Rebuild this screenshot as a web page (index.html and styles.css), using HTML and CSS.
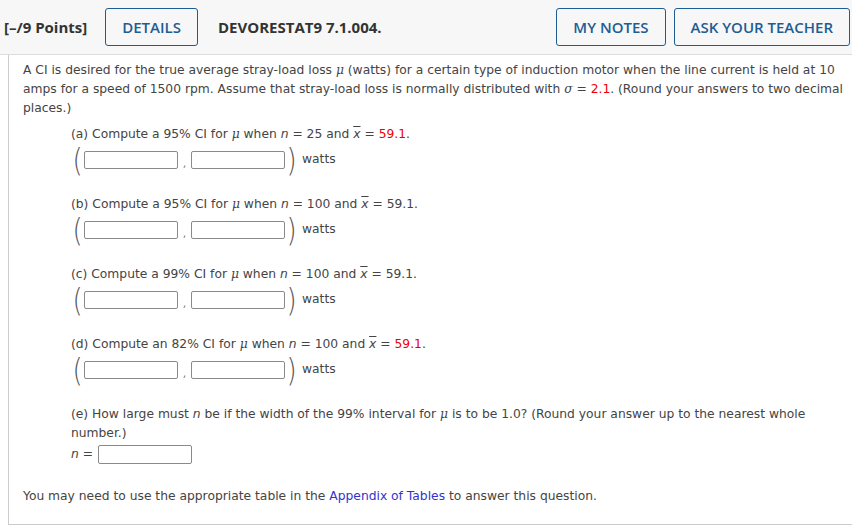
FILE: index.html
```html
<!DOCTYPE html>
<html>
<head>
<meta charset="utf-8">
<link rel="stylesheet" href="styles.css">
</head>
<body>
<div class="header">
  <span class="points">[–/9 Points]</span>
  <button class="btn details">DETAILS</button>
  <span class="qid">DEVORESTAT9 7.1.004.</span>
  <span class="spacer"></span>
  <button class="btn">MY NOTES</button>
  <button class="btn">ASK YOUR TEACHER</button>
</div>
<div class="content">
  <p class="intro">A CI is desired for the true average stray-load loss <i class="mu">μ</i> (watts) for a certain type of induction motor when the line current is held at 10 amps for a speed of 1500 rpm. Assume that stray-load loss is normally distributed with <i class="mu">σ</i> = <span class="red">2.1</span>. (Round your answers to two decimal places.)</p>

  <div class="part">
    <div class="q">(a) Compute a 95% CI for <i class="mu">μ</i> when <i>n</i> = 25 and <span class="xbar">x</span> = <span class="red">59.1</span>.</div>
    <div class="ans"><span class="paren">(</span><span class="box"></span><span class="comma">,</span><span class="box"></span><span class="paren">)</span><span class="unit">watts</span></div>
  </div>
  <div class="part">
    <div class="q">(b) Compute a 95% CI for <i class="mu">μ</i> when <i>n</i> = 100 and <span class="xbar">x</span> = 59.1.</div>
    <div class="ans"><span class="paren">(</span><span class="box"></span><span class="comma">,</span><span class="box"></span><span class="paren">)</span><span class="unit">watts</span></div>
  </div>
  <div class="part">
    <div class="q">(c) Compute a 99% CI for <i class="mu">μ</i> when <i>n</i> = 100 and <span class="xbar">x</span> = 59.1.</div>
    <div class="ans"><span class="paren">(</span><span class="box"></span><span class="comma">,</span><span class="box"></span><span class="paren">)</span><span class="unit">watts</span></div>
  </div>
  <div class="part">
    <div class="q">(d) Compute an 82% CI for <i class="mu">μ</i> when <i>n</i> = 100 and <span class="xbar">x</span> = <span class="red">59.1</span>.</div>
    <div class="ans"><span class="paren">(</span><span class="box"></span><span class="comma">,</span><span class="box"></span><span class="paren">)</span><span class="unit">watts</span></div>
  </div>
  <div class="part parte">
    <div class="qe">(e) How large must <i>n</i> be if the width of the 99% interval for <i class="mu">μ</i> is to be 1.0? (Round your answer up to the nearest whole number.)</div>
    <div class="nrow"><span class="nlabel"><i>n</i> =</span><span class="box nbox"></span></div>
  </div>
  <p class="foot">You may need to use the appropriate table in the <a href="#" class="link">Appendix of Tables</a> to answer this question.</p>
</div>
</body>
</html>
```

FILE: styles.css
```css
html, body {
  margin: 0;
  padding: 0;
  background: #ffffff;
}
.header {
  display: flex;
  align-items: center;
  height: 54px;
  background: #f7f7f7;
  border-bottom: 1px solid #dcdcdc;
  padding-left: 4px;
  padding-right: 2px;
  font-family: "Open Sans", sans-serif;
  font-size: 15px;
  color: #333333;
}
.points {
  font-weight: 700;
  margin-right: 18px;
}
.qid {
  font-weight: 700;
  margin-left: 20px;
}
.spacer { flex: 1; }
.btn {
  height: 38px;
  padding: 0 16px;
  border: 1px solid #1e5d94;
  border-radius: 3px;
  background: #f7f7f7;
  color: #1e5d94;
  font-family: "Open Sans", sans-serif;
  font-size: 15px;
  font-weight: 600;
  margin-left: 8px;
}
.details { margin-left: 0; }
.content {
  margin-left: 8px;
  border-left: 1px solid #cccccc;
  border-bottom: 1px solid #cccccc;
  padding: 6px 0 18px 14px;
  font-family: "DejaVu Sans", Verdana, sans-serif;
  font-size: 12.3px;
  line-height: 19px;
  color: #444444;
}
.intro {
  margin: 0;
  padding-right: 6px;
}
.mu { font-family: "DejaVu Serif", serif; font-style: italic; }
i { font-style: italic; }
.red { color: #ee0000; }
.xbar {
  text-decoration: overline;
  font-style: italic;
}
.part {
  margin: 7px 0 0 48px;
  padding-bottom: 12px;
}
.q { height: 19px; }
.ans {
  display: flex;
  align-items: center;
  height: 32px;
}
.paren {
  display: inline-block;
  font-family: "DejaVu Sans", sans-serif;
  font-weight: 200;
  font-size: 26px;
  line-height: 26px;
  transform: scaleY(1.25);
  color: #555555;
  width: 13px;
  text-align: center;
}
.box {
  display: inline-block;
  width: 92px;
  height: 16px;
  border: 1px solid #8a8a8a;
  border-radius: 2px;
  background: #ffffff;
  box-sizing: content-box;
}
.comma {
  display: inline-block;
  width: 13px;
  text-align: center;
  font-size: 11px;
  color: #777;
  padding-top: 6px;
}
.unit { margin-left: 4px; margin-top: -1px; }
.parte { padding-bottom: 0; margin-top: 7px; }
.qe { padding-right: 20px; }
.nrow {
  display: flex;
  align-items: center;
  height: 22px;
}
.nlabel { width: 27px; }
.nbox { width: 92px; height: 17px; }
.foot {
  margin: 22px 0 0 0;
}
.link { color: #3333cc; text-decoration: none; }
```
